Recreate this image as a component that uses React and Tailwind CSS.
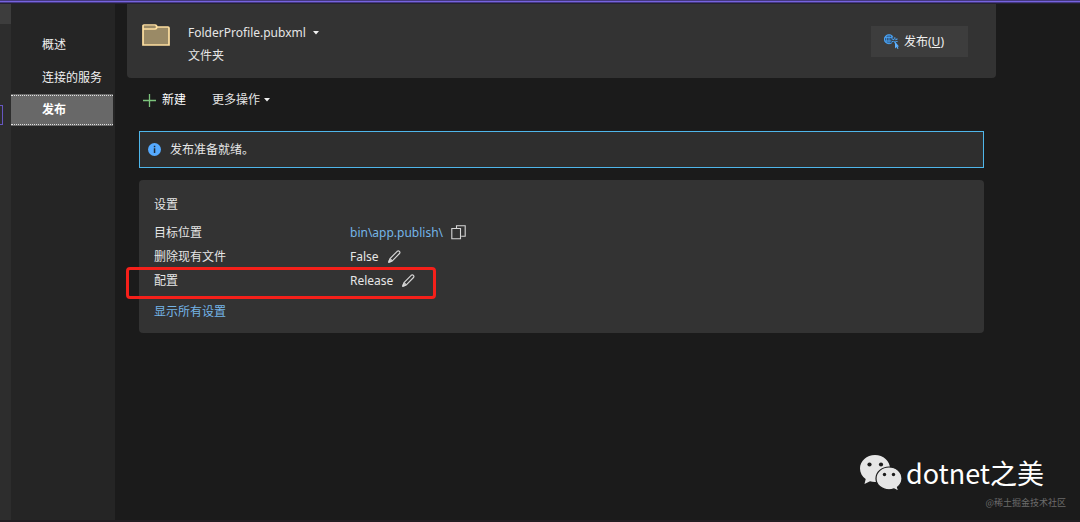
import React from "react";

const font = "font-['Noto_Sans','Noto_Sans_CJK_SC',sans-serif]";

function FolderIcon() {
  return (
    <svg width="28" height="24" viewBox="0 0 28 24" aria-hidden="true">
      <path d="M1 2h13v1h13v18H1z" fill="#9a8a66" />
      <path
        d="M1 5V2q0-1 1-1h11q1 0 1.500 1l.5 1h11q1 0 1 1v17H1V5h12q1 0 1.500-1L15 3"
        fill="none"
        stroke="#ffe0a0"
        strokeWidth="1.700"
      />
    </svg>
  );
}

function PublishIcon() {
  return (
    <svg width="15" height="15" viewBox="0 0 15 15" fill="none" stroke="#4aa3f5" aria-hidden="true">
      <circle cx="5" cy="5.200" r="4.500" fill="#2c5179" strokeWidth="1.100" />
      <path d="M.6 3.500h8.600M.6 7h8M5 .6v9.200M3 1.200q-1 4 0 8M7 1.200q1 2 1 4" strokeWidth=".8" />
      <circle cx="10.800" cy="6.300" r="3.400" fill="#3d3d3d" stroke="none" />
      <path d="M10.800 3.300v6M8.100 4.800l5.400 3M8.100 7.800l5.400-3" strokeWidth="1.100" />
      <circle cx="10.800" cy="6.300" r="1" fill="#3d3d3d" stroke="none" />
      <path d="M11 7.500v7l1.500-1.400 1 1.900 1-.5-.9-1.900h1.400z" fill="#5cb0ff" stroke="none" />
    </svg>
  );
}

function Caret() {
  return (
    <svg width="6" height="4" viewBox="0 0 6 4" aria-hidden="true">
      <path d="M0 0h6L3 3.500z" fill="#f1f1f1" />
    </svg>
  );
}

function InfoIcon() {
  return (
    <svg width="13" height="13" viewBox="0 0 13 13" aria-hidden="true">
      <circle cx="6.500" cy="6.500" r="6.500" fill="#55aaff" />
      <path d="M5.800 2.800h1.500v1.500H5.800zM5.800 5.300h1.500v4.800H5.800z" fill="#1f2a36" />
    </svg>
  );
}

function CopyIcon() {
  return (
    <svg width="15" height="15" viewBox="0 0 15 15" fill="none" stroke="#d6d6d6" strokeWidth="1.100" aria-hidden="true">
      <path d="M5.500 3V.8h8.700v10.400h-4" />
      <path d="M.8 3.500h8.700v10.200H.8z" />
    </svg>
  );
}

function PencilIcon() {
  return (
    <svg width="13" height="13" viewBox="0 0 13 13" fill="none" stroke="#d6d6d6" strokeWidth="1.200" strokeLinejoin="round" aria-hidden="true">
      <path d="M.8 12.200 2 8.600 9.200 1.300q1.200-1 2.200 0t.1 2.200L4.300 10.900z" />
      <path d="M2 8.600l2.300 2.300" />
      <path d="M.8 12.200l.7-2.200 1.500 1.500z" fill="#d6d6d6" />
    </svg>
  );
}

function ChatIcon() {
  return (
    <svg width="42" height="36" viewBox="0 0 42 36" aria-hidden="true">
      <path d="M15 0c8.300 0 15 6 15 13.500S23.300 27 15 27c-1.800 0-3.500-.3-5-.8L4.500 29l1.200-5C2.200 21.500 0 17.700 0 13.500 0 6 6.700 0 15 0z" fill="#e6e6e6" />
      <path
        d="M29 12c7.200 0 13 5 13 11.500 0 3.500-1.800 6.500-4.500 8.700l1.200 4-4.700-2.300c-1.600.6-3.200.9-5 .9-7.200 0-13-5-13-11.300S21.800 12 29 12z"
        fill="#e6e6e6"
        stroke="#1b1b1b"
        strokeWidth="1.200"
      />
      <g fill="#1b1b1b">
        <circle cx="9.500" cy="9.500" r="2.100" />
        <circle cx="21" cy="9.500" r="2.100" />
        <circle cx="24.500" cy="19.500" r="1.700" />
        <circle cx="33.500" cy="19.500" r="1.700" />
      </g>
    </svg>
  );
}

function Setting({ label, children, marked }) {
  return (
    <div className="relative flex h-6 items-center">
      <dt className="w-[196px] shrink-0">{label}</dt>
      <dd className="flex items-center">{children}</dd>
      {marked && (
        <span className="pointer-events-none absolute -left-7 -top-0.5 h-8 w-[310px] rounded border-[3px] border-[#f5201a]" />
      )}
    </div>
  );
}

export default function App() {
  return (
    <div className={`relative flex min-h-screen flex-col bg-[#1b1b1b] text-xs text-[#e6e6e6] ${font}`}>
      <div className="h-1 border-b border-[#242033] bg-[#45397f]">
        <div className="h-0.5 border-b border-[#7663e0]" />
      </div>
      <div className="flex flex-1">
        <div className="w-[11px] shrink-0 bg-[#2d2d2d]">
          <div className="h-5 bg-[#3d3d3d]" />
          <div className="mt-[81px] h-5 w-[3px] border border-l-0 border-[#6656c0]" />
        </div>
        <nav className="flex w-[104px] shrink-0 flex-col bg-[#252525] pr-0.5 pt-6 text-[#f1f1f1]">
          <a href="#overview" className="flex h-[33px] items-center pl-[31px]">概述</a>
          <a href="#services" className="flex h-[33px] items-center pl-[31px]">连接的服务</a>
          <a href="#publish" aria-current="page" className="bg-[#686868] py-px font-bold text-white">
            <span className="flex h-[30px] items-center border-y border-dotted border-[#e0e0e0] pl-[31px]">发布</span>
          </a>
        </nav>
        <main className="min-w-0 flex-1 pl-3 pr-[84px]">
          <header className="flex h-[74px] items-start rounded-b bg-[#333333] pl-[15px] pr-7">
            <div className="mt-5">
              <FolderIcon />
            </div>
            <div className="ml-[18px] mt-[17px]">
              <button type="button" className="flex h-6 items-center gap-[7px]">
                FolderProfile.pubxml
                <Caret />
              </button>
              <p className="leading-[22px]">文件夹</p>
            </div>
            <button
              type="button"
              className="ml-auto mt-[22px] flex h-[31px] w-[97px] items-center bg-[#3d3d3d] pl-[13px] text-[#f1f1f1]"
            >
              <PublishIcon />
              <span className="ml-[5px] pt-px">
                发布(<u>U</u>)
              </span>
            </button>
          </header>
          <div className="flex h-[53px] items-center gap-[26px] pb-[9px] pl-4">
            <button type="button" className="flex items-center gap-1.5 text-white">
              <svg width="13" height="13" viewBox="0 0 13 13" aria-hidden="true">
                <path d="M6.500 0v13M0 6.500h13" stroke="#7cc47c" strokeWidth="1.300" />
              </svg>
              新建
            </button>
            <button type="button" className="flex items-center gap-1">
              更多操作
              <Caret />
            </button>
          </div>
          <div className="px-3">
            <div role="status" className="flex h-[37px] items-center gap-[9px] border border-[#4fb6ea] bg-[#2e2e2e] pl-2">
              <InfoIcon />
              <span className="pt-px">发布准备就绪。</span>
            </div>
            <section className="mt-3 rounded bg-[#333333] px-[15px] pb-[9px] pt-[13px]">
              <h2 className="leading-6">设置</h2>
              <dl className="mt-1">
                <Setting label="目标位置">
                  <a href="#target" className="text-[#75b5e8]">bin\app.publish\</a>
                  <button type="button" aria-label="复制" className="mb-0.5 ml-2">
                    <CopyIcon />
                  </button>
                </Setting>
                <Setting label="删除现有文件">
                  False
                  <button type="button" aria-label="编辑删除现有文件" className="mb-0.5 ml-[9px]">
                    <PencilIcon />
                  </button>
                </Setting>
                <Setting label="配置" marked>
                  Release
                  <button type="button" aria-label="编辑配置" className="mb-0.5 ml-[9px]">
                    <PencilIcon />
                  </button>
                </Setting>
              </dl>
              <a href="#all" className="mt-[7px] block w-fit leading-6 text-[#75b5e8]">显示所有设置</a>
            </section>
          </div>
        </main>
      </div>
      <div className="h-0.5 bg-[#231c22]" />
      <div className="absolute bottom-[11px] right-3.5 flex flex-col items-end gap-1">
        <div className="mr-[22px] flex items-center gap-1">
          <ChatIcon />
          <span className="font-['Noto_Sans_CJK_SC',sans-serif] text-[27px] leading-9 text-white">dotnet之美</span>
        </div>
        <span className="font-['Noto_Sans_CJK_SC',sans-serif] text-[9px] leading-4 text-[#6c6c6c]">@稀土掘金技术社区</span>
      </div>
    </div>
  );
}
